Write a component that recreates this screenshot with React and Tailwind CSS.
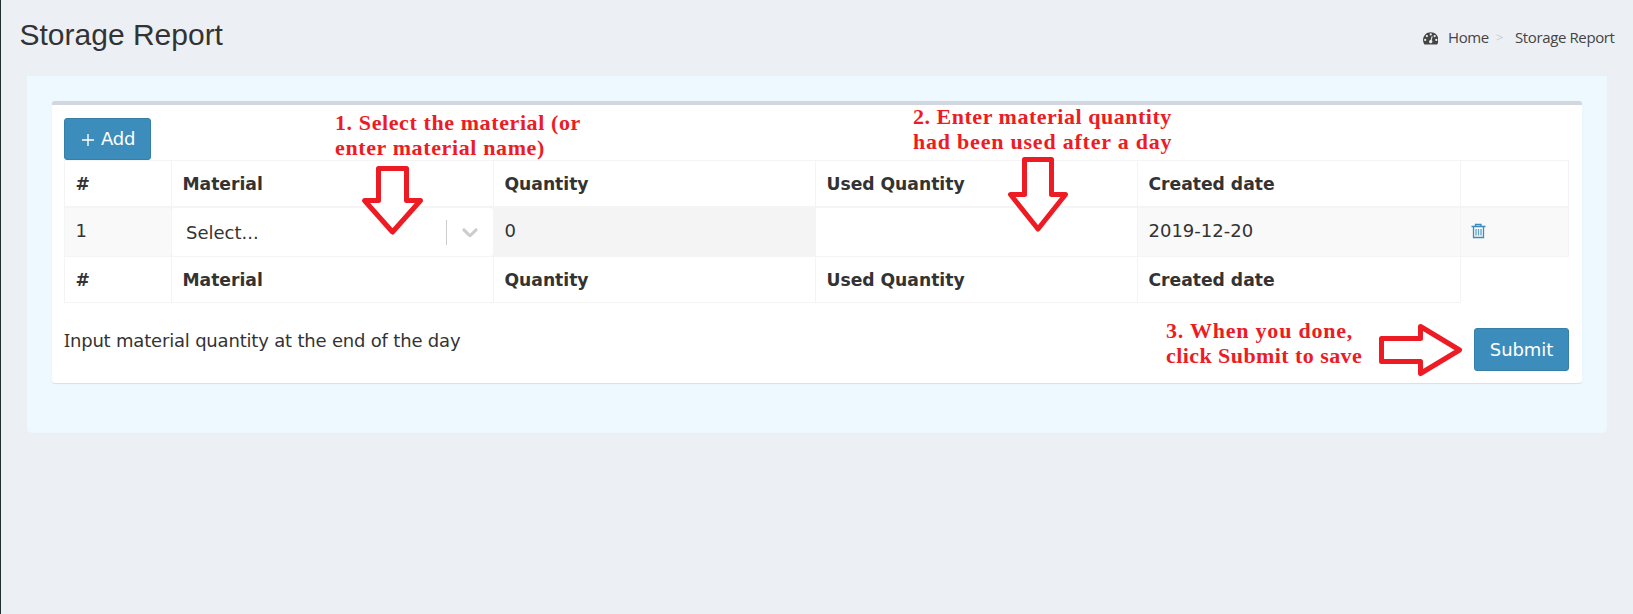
import React from "react";

const COLS = "grid grid-cols-[107px_322px_322px_322px_323px_108px]";
const LABELS = COLS + " text-[17.200px] font-bold tracking-[-0.020px]";

function DashboardIcon() {
  return (
    <svg className="h-[15.500px] w-[15.500px] fill-[#444]" viewBox="0 0 1792 1792">
      <path
        fillRule="evenodd"
        d="M384 1152a128 128 0 1 0-256 0a128 128 0 1 0 256 0zM576 704a128 128 0 1 0-256 0a128 128 0 1 0 256 0zM1004 1185l101-382q6-26-7.500-48.500t-38.500-29.500-48 6.500-30 39.500l-101 382q-60 5-107 43.500t-63 98.500q-20 77 20 146t117 89 146-20 89-117q16-60-6-117t-72-91zM1664 1152a128 128 0 1 0-256 0a128 128 0 1 0 256 0zM1024 512a128 128 0 1 0-256 0a128 128 0 1 0 256 0zM1472 704a128 128 0 1 0-256 0a128 128 0 1 0 256 0zM1792 1152q0 261-141 483-19 29-54 29H195q-35 0-54-29-141-221-141-483 0-182 71-348t191-286 286-191 348-71 348 71 286 191 191 286 71 348z"
      />
    </svg>
  );
}

function ChevronIcon() {
  return (
    <svg className="h-[26px] w-[26px] fill-[#ccc]" viewBox="0 0 20 20">
      <path d="M4.516 7.548c0.436-0.446 1.043-0.481 1.576 0l3.908 3.747 3.908-3.747c0.533-0.481 1.141-0.446 1.574 0 0.436 0.445 0.408 1.197 0 1.615-0.406 0.418-4.695 4.502-4.695 4.502-0.217 0.223-0.502 0.335-0.787 0.335s-0.570-0.112-0.789-0.335c0 0-4.287-4.084-4.695-4.502s-0.436-1.170 0-1.615z" />
    </svg>
  );
}

function TrashIcon() {
  return (
    <svg className="h-4 w-[15px]" viewBox="0 0 15 16" fill="none" stroke="#3c8dbc">
      <path d="M0.500 3.500H14.500M2.500 3.500V14.500H12.500V3.500M4.500 3.500V1.500H10V3.500" strokeWidth="1.300" />
      <path d="M5 6V12.500M7.500 6V12.500M10 6V12.500" strokeWidth="1.300" opacity="0.800" />
    </svg>
  );
}

function LabelRow({ footer }) {
  const cell =
    "flex items-center border-r border-[#f4f4f4] pl-[10.500px] pt-[2px] " +
    (footer ? "h-[46px] border-b" : "h-[45px]");
  return (
    <div className={LABELS}>
      <div className={cell}>#</div>
      <div className={cell}>Material</div>
      <div className={cell}>Quantity</div>
      <div className={cell}>Used Quantity</div>
      <div className={cell}>Created date</div>
      {!footer && <div className="border-r border-[#f4f4f4]" />}
    </div>
  );
}

function Arrow({ d, className, viewBox }) {
  return (
    <svg className={"absolute " + className} viewBox={viewBox}>
      <path d={d} fill="white" stroke="#ed1c24" strokeWidth="5" strokeLinejoin="round" />
    </svg>
  );
}

function Annotations() {
  const note =
    "absolute whitespace-nowrap font-['Liberation_Serif',serif] text-[22px] leading-[25px] font-bold text-[#ed1c24]";
  return (
    <>
      <div className={note + " left-[334px] top-[110px]"}>
        <p className="tracking-[0.600px]">1. Select the material (or</p>
        <p className="tracking-[0.620px]">enter material name)</p>
      </div>
      <div className={note + " left-[912px] top-[104px]"}>
        <p className="tracking-[0.520px]">2. Enter material quantity</p>
        <p className="tracking-[0.780px]">had been used after a day</p>
      </div>
      <div className={note + " left-[1165px] top-[318px]"}>
        <p className="tracking-[0.780px]">3. When you done,</p>
        <p className="tracking-[0.430px]">click Submit to save</p>
      </div>
      <Arrow
        className="left-[359px] top-[164px] h-[72px] w-[66px]"
        viewBox="360 164 66 72"
        d="M378.500 168.500H406.500V200.500H420.500L392.500 232L364.500 200.500H378.500Z"
      />
      <Arrow
        className="left-[1005px] top-[155px] h-[79px] w-[64px]"
        viewBox="1006 155 64 79"
        d="M1024.500 159.500H1051.500V194.500H1065.500L1038 229L1010.500 194.500H1024.500Z"
      />
      <Arrow
        className="left-[1375px] top-[320px] h-[60px] w-[90px]"
        viewBox="1376 320 90 60"
        d="M1381.500 338.500H1420.500V326.500L1459.500 350L1420.500 373.500V361.500H1381.500Z"
      />
    </>
  );
}

export default function App() {
  const button =
    "flex items-center rounded-[3px] border border-[#367fa9] bg-[#3c8dbc] text-lg text-white";
  return (
    <div className="relative h-[614px] w-[1633px] overflow-hidden border-l border-[#222d32] bg-[#ecf0f5] font-['DejaVu_Sans',sans-serif] text-[#333]">
      <header className="flex h-[76px] items-start justify-between pl-[18.500px] pr-[17px]">
        <h1 className="pt-[17px] font-['Liberation_Sans',sans-serif] text-[30px] leading-[35px]">
          Storage Report
        </h1>
        <nav className="flex items-center pt-[27px] font-['Open_Sans',sans-serif] text-[15px] leading-[21px] tracking-[-0.380px] text-[#444]">
          <DashboardIcon />
          <span className="ml-[10px] w-[41px]">Home</span>
          <span className="ml-[7px] w-[19px] text-[13px] text-[#ccc]">&gt;</span>
          <span className="w-[101px]">Storage Report</span>
        </nav>
      </header>

      <main className="ml-[26px] h-[357px] w-[1580px] rounded-b-[5px] bg-[#edf8ff] px-[25px] pt-[25px]">
        <section className="h-[282px] rounded-[3px] border-t-4 border-[#d2d6de] bg-white px-3 pt-[13px] shadow-[0_1px_1px_rgba(0,0,0,0.1)]">
          <button className={button + " h-[42px] w-[87px] pl-[17px]"}>
            <svg className="mt-[2px] h-3 w-3" viewBox="0 0 12 12" stroke="white" strokeWidth="1.400">
              <path d="M6 0V12M0 6H12" />
            </svg>
            <span className="ml-[7px] tracking-[-0.200px]">Add</span>
          </button>

          <div className="w-[1505px] border-l border-t border-[#f4f4f4]">
            <LabelRow />
            <div className={COLS + " h-[51px] border-t-2 border-b border-[#f4f4f4] bg-[#f9f9f9] text-lg"}>
              <div className="flex items-center border-r border-[#f4f4f4] pb-[2px] pl-[10.500px]">1</div>
              <div className="border-r border-[#f4f4f4]">
                <div className="flex h-full items-center rounded bg-white pl-[14px]">
                  <span className="flex-1 pt-[2px]">Select...</span>
                  <span className="h-[25px] w-px bg-[#ccc]" />
                  <span className="ml-[10px] mr-[10px] pb-px">
                    <ChevronIcon />
                  </span>
                </div>
              </div>
              <div className="flex items-center bg-[#f4f4f4] pb-[2px] pl-[10.500px]">0</div>
              <div className="border-r border-[#f4f4f4] bg-white" />
              <div className="flex items-center border-r border-[#f4f4f4] pb-[2px] pl-[10.500px]">2019-12-20</div>
              <div className="flex items-center border-r border-[#f4f4f4] pb-[3px] pl-[10px]">
                <TrashIcon />
              </div>
            </div>
            <LabelRow footer />
          </div>

          <div className="flex items-start justify-between pr-px pt-[25px]">
            <p className="pt-px text-lg leading-6 tracking-[-0.190px]">
              <span className="font-['Noto_Sans',sans-serif] leading-none">I</span>nput material quantity at the end of the day
            </p>
            <button className={button + " h-[43px] w-[95px] justify-center tracking-[-0.100px]"}>Submit</button>
          </div>
        </section>
      </main>

      <Annotations />
    </div>
  );
}
